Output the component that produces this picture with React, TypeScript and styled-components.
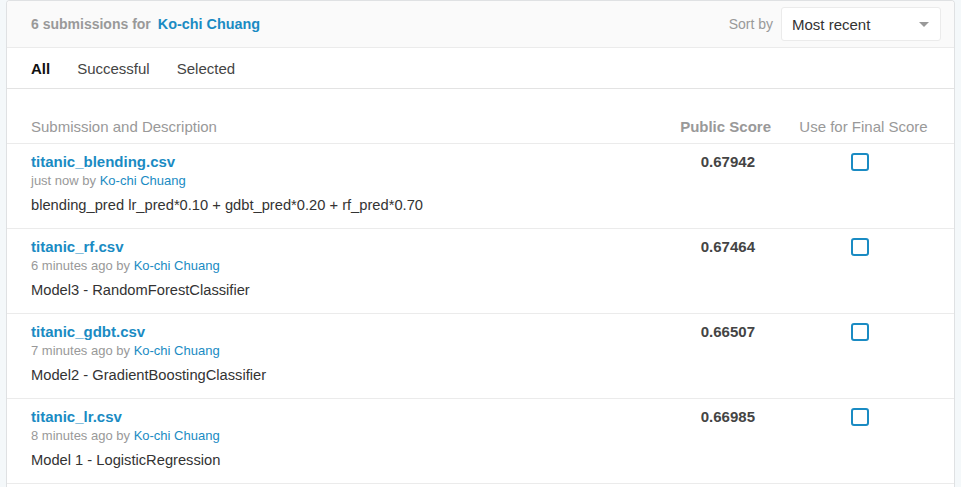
import styled, { createGlobalStyle } from 'styled-components';

const GlobalStyle = createGlobalStyle`
  html, body {
    margin: 0;
    padding: 0;
    background: #f4f8fa;
    font-family: "Liberation Sans", Arial, sans-serif;
  }
`;

const BLUE = '#1a8bc3';

const Page = styled.div`
  padding: 0 6px 0 6px;
`;

const Card = styled.div`
  background: #fff;
  border: 1px solid #dfe1e3;
  border-bottom: none;
  border-radius: 4px 4px 0 0;
  overflow: hidden;
`;

const Header = styled.div`
  height: 46px;
  display: flex;
  align-items: center;
  justify-content: space-between;
  padding: 0 13px 0 24px;
  background: #fafafa;
  border-bottom: 1px solid #ebebeb;
`;

const Title = styled.div`
  font-size: 14px;
  font-weight: 700;
  color: #999;
  display: flex;
  gap: 7px;
`;

const NameLink = styled.a`
  color: ${BLUE};
  text-decoration: none;
  font-size: 14.4px;
`;

const SortArea = styled.div`
  display: flex;
  align-items: center;
  gap: 8px;
`;

const SortLabel = styled.span`
  font-size: 14px;
  color: #999;
`;

const Select = styled.div`
  width: 160px;
  height: 34px;
  box-sizing: border-box;
  border: 1px solid #ebebeb;
  border-radius: 3px;
  background: #fff;
  display: flex;
  align-items: center;
  justify-content: space-between;
  padding: 0 11px 0 10px;
  font-size: 15px;
  color: #333;
`;

const Caret = styled.span`
  width: 0;
  height: 0;
  border-left: 5px solid transparent;
  border-right: 5px solid transparent;
  border-top: 5px solid #999;
`;

const Tabs = styled.div`
  height: 40px;
  display: flex;
  align-items: center;
  gap: 27px;
  padding-left: 24px;
  border-bottom: 1px solid #e3e3e3;
`;

const Tab = styled.span<{ $active?: boolean }>`
  font-size: 15px;
  color: ${(p) => (p.$active ? '#111' : '#444')};
  font-weight: ${(p) => (p.$active ? 700 : 400)};
`;

const Grid = styled.div`
  display: grid;
  grid-template-columns: 1fr 135px 155px;
  padding: 0 13px 0 24px;
  border-bottom: 1px solid #ebebeb;
`;

const HeadRow = styled(Grid)`
  align-items: end;
  padding-bottom: 7px;
  box-sizing: content-box;
  height: 47px;
  font-size: 15px;
  color: #999;
`;

const HeadCell = styled.div<{ $align?: string; $bold?: boolean }>`
  text-align: ${(p) => p.$align || 'left'};
  font-weight: ${(p) => (p.$bold ? 700 : 400)};
  padding-right: ${(p) => (p.$align === 'right' ? '15px' : '0')};
  line-height: 18px;
`;

const Row = styled(Grid)`
  padding-top: 9px;
  box-sizing: border-box;
  height: 85px;
  align-items: start;
`;

const FileName = styled.a`
  display: block;
  font-size: 15px;
  font-weight: 700;
  color: ${BLUE};
  line-height: 18px;
`;

const Meta = styled.div`
  font-size: 13px;
  color: #999;
  line-height: 20px;
`;

const MetaLink = styled.a`
  color: ${BLUE};
  text-decoration: none;
`;

const Desc = styled.div`
  margin-top: 5px;
  font-size: 14.7px;
  color: #333;
  line-height: 18px;
`;

const Score = styled.div`
  text-align: right;
  padding-right: 31px;
  font-size: 15px;
  font-weight: 700;
  color: #444;
  line-height: 18px;
`;

const CheckCell = styled.div`
  display: flex;
  justify-content: center;
  padding-right: 8px;
`;

const Checkbox = styled.span`
  width: 18px;
  height: 18px;
  box-sizing: border-box;
  border: 2px solid ${BLUE};
  border-radius: 3px;
  background: #fff;
`;

const Tail = styled.div`
  height: 10px;
`;

const submissions = [
  { file: 'titanic_blending.csv', when: 'just now', desc: 'blending_pred lr_pred*0.10 + gdbt_pred*0.20 + rf_pred*0.70', score: '0.67942' },
  { file: 'titanic_rf.csv', when: '6 minutes ago', desc: 'Model3 - RandomForestClassifier', score: '0.67464' },
  { file: 'titanic_gdbt.csv', when: '7 minutes ago', desc: 'Model2 - GradientBoostingClassifier', score: '0.66507' },
  { file: 'titanic_lr.csv', when: '8 minutes ago', desc: 'Model 1 - LogisticRegression', score: '0.66985' },
];

const App = () => {
  return (
    <>
      <GlobalStyle />
      <Page>
        <Card>
          <Header>
            <Title>
              <span>6 submissions for</span>
              <NameLink>Ko-chi Chuang</NameLink>
            </Title>
            <SortArea>
              <SortLabel>Sort by</SortLabel>
              <Select>
                Most recent
                <Caret />
              </Select>
            </SortArea>
          </Header>
          <Tabs>
            <Tab $active>All</Tab>
            <Tab>Successful</Tab>
            <Tab>Selected</Tab>
          </Tabs>
          <HeadRow>
            <HeadCell>Submission and Description</HeadCell>
            <HeadCell $align="right" $bold>Public Score</HeadCell>
            <HeadCell $align="center">Use for Final Score</HeadCell>
          </HeadRow>
          {submissions.map((s) => (
            <Row key={s.file}>
              <div>
                <FileName>{s.file}</FileName>
                <Meta>
                  {s.when} by <MetaLink>Ko-chi Chuang</MetaLink>
                </Meta>
                <Desc>{s.desc}</Desc>
              </div>
              <Score>{s.score}</Score>
              <CheckCell>
                <Checkbox />
              </CheckCell>
            </Row>
          ))}
          <Tail />
        </Card>
      </Page>
    </>
  );
};

export default App;
